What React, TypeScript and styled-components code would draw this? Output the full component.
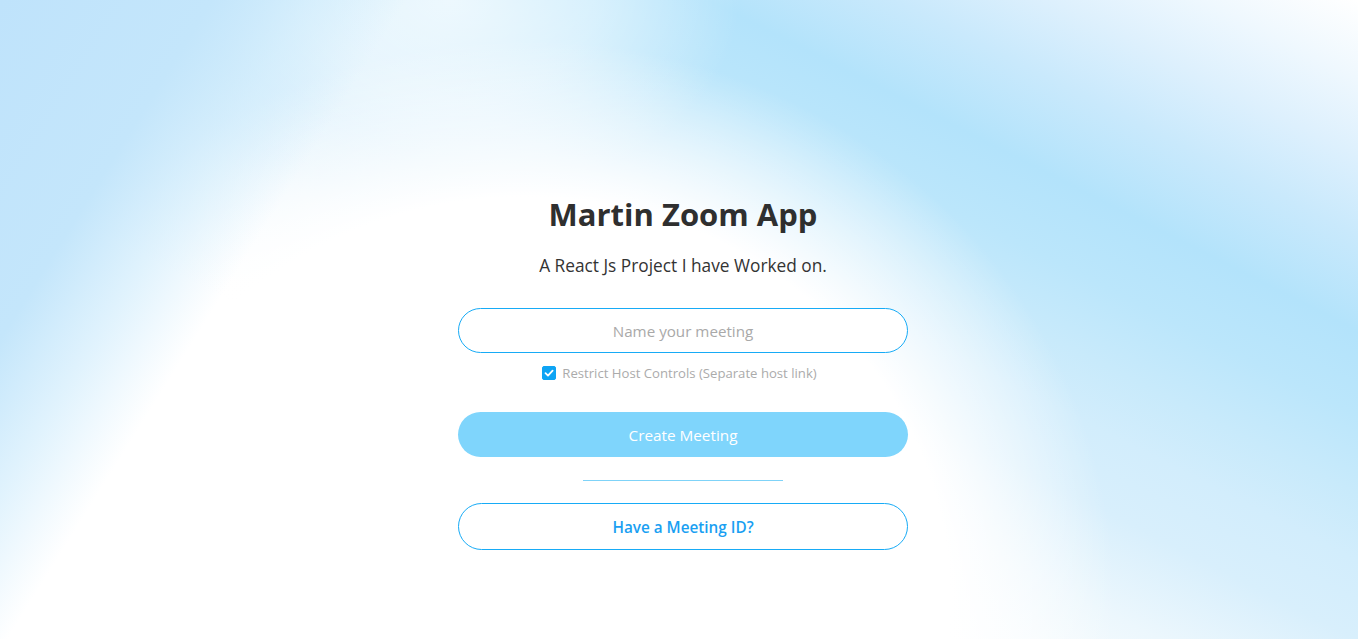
import React, { useState } from "react";
import styled, { createGlobalStyle } from "styled-components";

const GlobalStyle = createGlobalStyle`
  html, body { margin: 0; padding: 0; }
  body { font-family: "Open Sans", "Noto Sans", Arial, sans-serif; color: #333; }
  * { box-sizing: border-box; }
`;

const Page = styled.main`
  min-height: 100vh;
  display: flex;
  flex-direction: column;
  align-items: center;
  padding: 190px 0 0 8px;
  background:
    linear-gradient(122deg, #bfe3fb 0px, #c4e6fb 180px, rgba(205,235,252,0.6) 265px, rgba(215,239,252,0) 345px),
    radial-gradient(ellipse 590px 560px at 525px 600px, #ffffff 0%, #ffffff 72%, rgba(255,255,255,0) 100%),
    radial-gradient(ellipse 290px 200px at 450px 0px, rgba(255,255,255,0.7) 0%, rgba(255,255,255,0.45) 50%, rgba(255,255,255,0) 100%),
    linear-gradient(207deg, #ffffff 0px, #eff8fe 70px, #ddf0fd 140px, #c9e9fc 210px, #b3e3fb 295px, #bbe6fb 370px, #c8eafb 440px, #d2edfc 500px, #d8effc 570px, #ecf7fd 660px, #ffffff 780px);
`;

const Title = styled.h1`
  margin: 0;
  font-size: 31px;
  line-height: 48px;
  font-weight: 700;
  color: #2f2f2f;
`;

const Subtitle = styled.p`
  margin: 16px 0 0;
  font-size: 17.3px;
  line-height: 24px;
  color: #333;
`;

const Form = styled.div`
  width: 450px;
  display: flex;
  flex-direction: column;
  align-items: center;
  margin-top: 30px;
`;

const Input = styled.input`
  width: 100%;
  height: 45px;
  border: 1px solid #17abf6;
  border-radius: 23px;
  background: #ffffff;
  text-align: center;
  font-family: inherit;
  font-size: 15.2px;
  color: #333;
  outline: none;
  &::placeholder { color: #a9a9a9; }
`;

const CheckRow = styled.label`
  display: flex;
  align-items: center;
  gap: 6px;
  margin: 11px 7px 0 0;
  font-size: 13.15px;
  line-height: 18px;
  color: #ababab;
  cursor: pointer;
`;

const Box = styled.span<{ $on: boolean }>`
  width: 14px;
  height: 14px;
  border-radius: 2px;
  background: ${(p) => (p.$on ? "#0ea4f4" : "#fff")};
  border: 1px solid ${(p) => (p.$on ? "#0ea4f4" : "#999")};
  display: flex;
  align-items: center;
  justify-content: center;
`;

const HiddenCheck = styled.input`
  display: none;
`;

const PrimaryButton = styled.button`
  width: 100%;
  height: 45px;
  margin-top: 30px;
  border: none;
  border-radius: 23px;
  background: #7fd5fc;
  color: #ffffff;
  font-family: inherit;
  font-size: 15.3px;
  cursor: pointer;
`;

const Divider = styled.hr`
  width: 200px;
  height: 1px;
  border: none;
  background: #7fd3f8;
  margin: 23px 0 0;
`;

const OutlineButton = styled.button`
  width: 100%;
  height: 47px;
  margin-top: 22px;
  border: 1px solid #17abf6;
  border-radius: 24px;
  background: transparent;
  color: #1a9ff2;
  font-family: inherit;
  font-size: 15.3px;
  font-weight: 600;
  cursor: pointer;
`;

export default function App() {
  const [restrict, setRestrict] = useState(true);
  return (
    <>
      <GlobalStyle />
      <Page>
        <Title>Martin Zoom App</Title>
        <Subtitle>A React Js Project I have Worked on.</Subtitle>
        <Form>
          <Input placeholder="Name your meeting" />
          <CheckRow>
            <HiddenCheck type="checkbox" checked={restrict} onChange={() => setRestrict(!restrict)} />
            <Box $on={restrict}>
              {restrict && (
                <svg width="10" height="10" viewBox="0 0 10 10">
                  <path d="M1.5 5.2 L4 7.6 L8.6 2.6" fill="none" stroke="#fff" strokeWidth="1.8" strokeLinecap="round" strokeLinejoin="round" />
                </svg>
              )}
            </Box>
            Restrict Host Controls (Separate host link)
          </CheckRow>
          <PrimaryButton>Create Meeting</PrimaryButton>
          <Divider />
          <OutlineButton>Have a Meeting ID?</OutlineButton>
        </Form>
      </Page>
    </>
  );
}
